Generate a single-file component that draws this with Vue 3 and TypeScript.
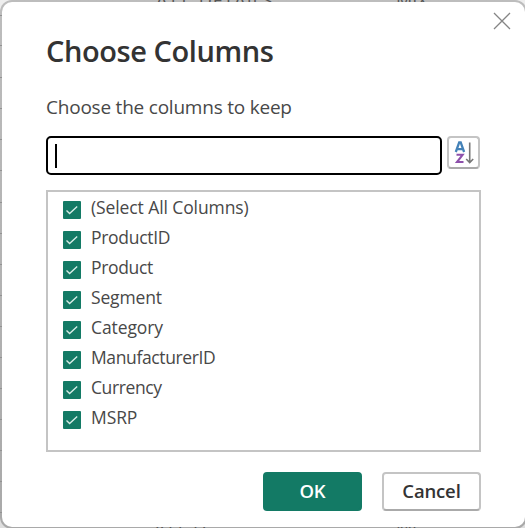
<script setup lang="ts">
import { ref } from 'vue'

interface Column {
  name: string
  checked: boolean
  spacing: number
}

const columns = ref<Column[]>([
  { name: '(Select All Columns)', checked: true, spacing: -0.1 },
  { name: 'ProductID', checked: true, spacing: -0.3 },
  { name: 'Product', checked: true, spacing: -0.33 },
  { name: 'Segment', checked: true, spacing: -0.15 },
  { name: 'Category', checked: true, spacing: -0.1 },
  { name: 'ManufacturerID', checked: true, spacing: -0.37 },
  { name: 'Currency', checked: true, spacing: -0.4 },
  { name: 'MSRP', checked: true, spacing: -0.1 },
])

const gridLines = [15, 45, 77, 108, 139, 170, 202, 233, 264, 295, 326, 357, 388, 419, 450, 481, 512]
</script>

<template>
  <div class="page">
    <span class="behind behind-title">ATT_DETAILS</span>
    <span class="behind behind-side">MIX</span>
    <span class="behind behind-bottom">ATT_D</span>
    <span class="behind behind-end">Mi</span>
    <main class="dialog">
      <button class="close" aria-label="Close">
        <svg width="18" height="18" viewBox="0 0 18 18">
          <path d="M1 1 L17 17 M17 1 L1 17" fill="none" stroke="#858585" stroke-width="1.3" />
        </svg>
      </button>
      <h1>Choose Columns</h1>
      <p class="lead">Choose the columns to keep</p>
      <div class="search-row">
        <div class="search"><span class="caret"></span></div>
        <button class="sort" aria-label="Sort">
          <svg width="29" height="29" viewBox="0 0 29 29">
            <path d="M6.8 14 L10.2 4.4 H11.7 L15.1 14 M8.2 11.2 H13.7" fill="none" stroke="#4482b8" stroke-width="2.3" />
            <path d="M7.5 16.8 H13.6 L8 24 H14.5" fill="none" stroke="#8d50ab" stroke-width="2.1" />
            <path d="M20.7 4.5 V24.5 M17.2 21 L20.7 24.5 L24.2 21" fill="none" stroke="#777" stroke-width="1.6" />
          </svg>
        </button>
      </div>
      <ul class="list">
        <li v-for="column in columns" :key="column.name">
          <span class="box">
            <svg v-if="column.checked" width="18" height="18" viewBox="0 0 18 18">
              <path d="M3.5 9.6 L6.6 12.6 L14.2 5.4" fill="none" stroke="#d5ece6" stroke-width="1.4" />
            </svg>
          </span>
          <span class="name" :style="{ letterSpacing: column.spacing + 'px' }">{{ column.name }}</span>
        </li>
      </ul>
      <footer class="actions">
        <button class="ok">OK</button>
        <button class="cancel">Cancel</button>
      </footer>
    </main>
    <i v-for="y in gridLines" :key="y" class="tick" :style="{ top: y + 'px' }"></i>
  </div>
</template>

<style>
body {
  background: #e3e3e3;
  overflow: hidden;
}
</style>

<style scoped>
* {
  box-sizing: border-box;
}
.page {
  position: relative;
  width: 525px;
  height: 528px;
  overflow: hidden;
  font-family: "Open Sans", "Noto Sans", sans-serif;
  background: linear-gradient(#eee, #dedede);
}
.dialog {
  width: 527px;
  height: 529px;
  padding: 32px 44px 0;
  border: 2px solid transparent;
  border-radius: 12px;
  background:
    linear-gradient(#fff, #fff) padding-box,
    linear-gradient(#bdbdbd, #a9a9a9) border-box;
}
button {
  margin: 0;
  padding: 0;
  font-family: inherit;
}
.close {
  position: absolute;
  left: 493px;
  top: 12px;
  width: 18px;
  height: 18px;
  border: 0;
  background: none;
}
svg {
  display: block;
}
h1 {
  margin: 0;
  height: 40px;
  line-height: 33px;
  font-size: 29px;
  font-weight: 600;
  letter-spacing: -0.42px;
  color: #333;
  white-space: nowrap;
}
.lead {
  margin: 20px 0 0;
  height: 26px;
  line-height: 26px;
  font-size: 19px;
  letter-spacing: -0.22px;
  color: #484848;
  white-space: nowrap;
}
.search-row {
  display: flex;
  align-items: flex-start;
  gap: 5px;
  margin-top: 16px;
}
.search {
  width: 396px;
  height: 39px;
  padding: 6px 7px;
  border: 2px solid #000;
  border-radius: 5px;
}
.caret {
  display: block;
  width: 2px;
  height: 24px;
  background: #000;
}
.sort {
  width: 33px;
  height: 33px;
  border: 2px solid #c4c4c4;
  border-bottom-color: #aaa;
  border-radius: 4px;
  background: #fff;
}
.list {
  width: 435px;
  height: 262px;
  margin: 15px 0 0;
  padding: 2px 15px;
  border: 2px solid #c4c4c4;
  list-style: none;
}
li {
  display: flex;
  height: 30px;
  gap: 10px;
}
.box {
  width: 18px;
  height: 18px;
  margin-top: 7px;
  border-radius: 1px;
  background: #137a65;
}
.name {
  line-height: 26px;
  font-size: 17.5px;
  color: #484848;
  white-space: nowrap;
}
.actions {
  display: flex;
  gap: 20px;
  margin: 20px 0 0 217px;
}
.ok,
.cancel {
  width: 99px;
  height: 39px;
  padding-bottom: 2px;
  line-height: 33px;
  border-radius: 4px;
  font-size: 18.5px;
  font-weight: 600;
  letter-spacing: -0.15px;
}
.ok {
  border: 2px solid #137a65;
  background: #137a65;
  color: #fff;
}
.cancel {
  border: 2px solid #c4c4c4;
  border-bottom-color: #aaa;
  background: #fff;
  color: #333;
}
.behind {
  position: absolute;
  z-index: 1;
  overflow: hidden;
  height: 2px;
  line-height: 0;
  font-size: 18px;
  color: #555;
  white-space: nowrap;
}
.behind-title {
  left: 156px;
  top: 0;
  letter-spacing: 0.9px;
}
.behind-side {
  left: 396px;
  top: 0;
}
.behind-bottom {
  left: 154px;
  top: 527px;
}
.behind-end {
  left: 396px;
  top: 527px;
}
.tick {
  position: absolute;
  left: 0;
  width: 2px;
  height: 1px;
  background: #929292;
}
</style>
